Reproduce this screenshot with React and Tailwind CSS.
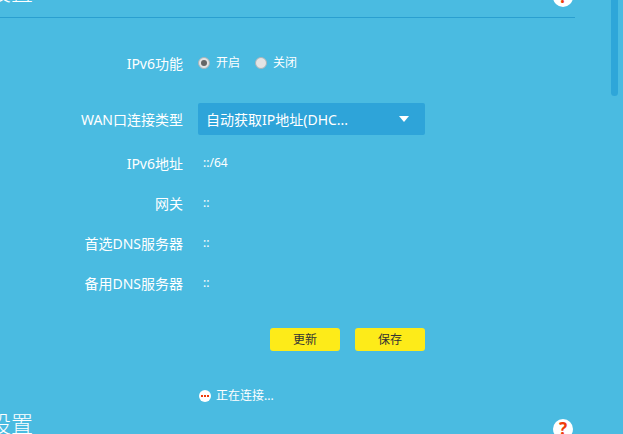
import React from 'react';

const font = "font-['Noto_Sans','Noto_Sans_CJK_SC',sans-serif]";

const SectionHead = ({ className = '' }) => (
  <div className={`flex items-center justify-between h-[36px] w-[586px] -ml-[11px] pr-[2px] border-b border-[#2a9fd0] ${className}`}>
    <span className="-mt-[18px] text-[22px] leading-[30px] text-white font-light">设置</span>
    <span className="-mt-[6px] flex items-center justify-center w-5 h-5 rounded-full bg-white text-[#f03c0a] text-[17px] font-bold leading-none">?</span>
  </div>
);

const Radio = ({ label, checked }) => (
  <label className="flex items-center gap-[6px] text-[12px] text-white">
    <span className="flex items-center justify-center w-3 h-3 rounded-full bg-[#e4e4e4] border border-[#a9b4b9]">
      {checked && <span className="w-[6px] h-[6px] rounded-full bg-[#666]" />}
    </span>
    {label}
  </label>
);

const InfoRow = ({ label, value }) => (
  <div className="flex items-center h-[40px]">
    <div className="w-[183px] text-right text-[14px] text-white">{label}</div>
    <div className="ml-[20px] text-[12px] text-white -mt-[1px]">{value}</div>
  </div>
);

export default function App() {
  return (
    <div className={`relative h-[434px] w-[623px] overflow-hidden bg-[#4abbe1] ${font}`}>
      <SectionHead className="-mt-[18px]" />

      <div className="flex items-center h-[40px] mt-[25px]">
        <div className="w-[183px] text-right text-[14px] text-white">IPv6功能</div>
        <div className="flex items-center gap-[15px] ml-[15px] -mt-[1px]">
          <Radio label="开启" checked />
          <Radio label="关闭" />
        </div>
      </div>

      <div className="flex items-center mt-[20px] h-[32px]">
        <div className="w-[183px] text-right text-[14px] text-white">WAN口连接类型</div>
        <div className="flex items-center justify-between w-[227px] h-[32px] ml-[15px] pl-2 pr-4 rounded-[2px] bg-[#2ea4d9] text-[14px] text-white">
          <span>自动获取IP地址(DHC...</span>
          <svg width="10" height="6" viewBox="0 0 10 6"><path d="M0 0h10L5 6z" fill="#fff" /></svg>
        </div>
      </div>

      <div className="mt-[8px]">
        <InfoRow label="IPv6地址" value="::/64" />
        <InfoRow label="网关" value="::" />
        <InfoRow label="首选DNS服务器" value="::" />
        <InfoRow label="备用DNS服务器" value="::" />
      </div>

      <div className="flex gap-[15px] ml-[270px] mt-[25px]">
        <button className="w-[70px] h-[23px] rounded-[3px] bg-[#fdeb19] text-[12px] text-[#333]">更新</button>
        <button className="w-[70px] h-[23px] rounded-[3px] bg-[#fdeb19] text-[12px] text-[#333]">保存</button>
      </div>

      <div className="flex items-center gap-[5px] ml-[199px] mt-[36px] h-[18px] text-[12px] text-white">
        <span className="flex items-center justify-center gap-[1px] w-3 h-3 rounded-full bg-white">
          <i className="w-[2px] h-[2px] bg-[#f03c0a]" />
          <i className="w-[2px] h-[2px] bg-[#f03c0a]" />
          <i className="w-[2px] h-[2px] bg-[#f03c0a]" />
        </span>
        正在连接...
      </div>

      <SectionHead className="mt-[9px]" />

      <div className="absolute right-[5px] top-0 w-[7px] h-[96px] rounded-b-[4px] bg-[#2ea6d9]" />
    </div>
  );
}
